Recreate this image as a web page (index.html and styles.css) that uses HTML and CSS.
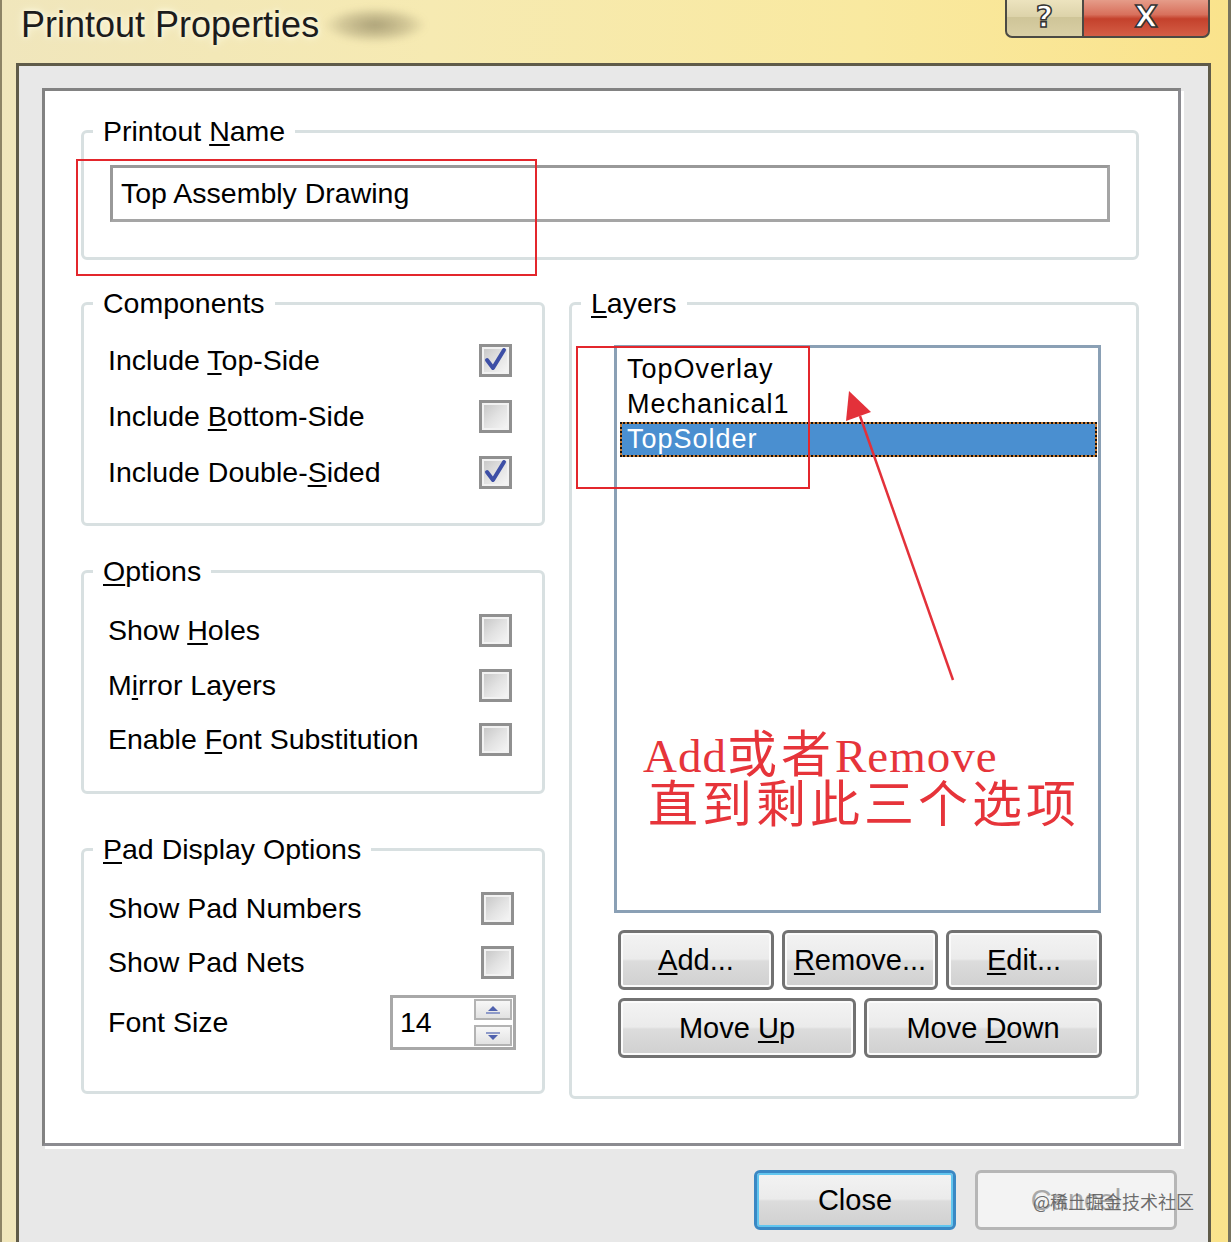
FILE: index.html
```html
<!DOCTYPE html>
<html>
<head>
<meta charset="utf-8">
<title>Printout Properties</title>
<link rel="stylesheet" href="styles.css">
</head>
<body>
<div class="window">
  <div class="titlebar">
    <div class="title">Printout Properties</div>
    <div class="smudge"></div>
    <div class="caption">
      <div class="cap help">?</div>
      <div class="cap close">X</div>
    </div>
  </div>
  <div class="client">
    <div class="panel">
      <fieldset class="group">
        <legend>Printout <u>N</u>ame</legend>
        <div class="name-body"><div class="textbox">Top Assembly Drawing</div></div>
      </fieldset>
      <div class="cols">
        <div class="left-col">
          <fieldset class="group">
            <legend>Components</legend>
            <div class="rows comp-rows">
              <div class="row"><span>Include <u>T</u>op-Side</span><span class="cb"><svg viewBox="0 0 27 27" width="27" height="27"><path d="M5 13 L11 21 L22 3" fill="none" stroke="#3d4fa6" stroke-width="4" stroke-linejoin="round" stroke-linecap="round"/></svg></span></div>
              <div class="row"><span>Include <u>B</u>ottom-Side</span><span class="cb"></span></div>
              <div class="row"><span>Include Double-<u>S</u>ided</span><span class="cb"><svg viewBox="0 0 27 27" width="27" height="27"><path d="M5 13 L11 21 L22 3" fill="none" stroke="#3d4fa6" stroke-width="4" stroke-linejoin="round" stroke-linecap="round"/></svg></span></div>
            </div>
          </fieldset>
          <fieldset class="group opt-group">
            <legend><u>O</u>ptions</legend>
            <div class="rows opt-rows">
              <div class="row"><span>Show <u>H</u>oles</span><span class="cb"></span></div>
              <div class="row"><span>M<u>i</u>rror Layers</span><span class="cb"></span></div>
              <div class="row"><span>Enable <u>F</u>ont Substitution</span><span class="cb"></span></div>
            </div>
          </fieldset>
          <fieldset class="group pad-group">
            <legend><u>P</u>ad Display Options</legend>
            <div class="rows pad-rows">
              <div class="row"><span>Show Pad Numbers</span><span class="cb"></span></div>
              <div class="row row-b"><span>Show Pad Nets</span><span class="cb"></span></div>
              <div class="row row-spin"><span>Font Size</span>
                <div class="spin"><span class="spin-val">14</span>
                  <div class="spin-btns">
                    <div class="sb"><svg viewBox="0 0 16 10" width="16" height="10"><path d="M8 1 L13 6 L3 6 Z" fill="#4f61ae"/><rect x="1" y="7" width="14" height="2" fill="#8f9bc9"/></svg></div>
                    <div class="sb"><svg viewBox="0 0 16 10" width="16" height="10"><rect x="1" y="1" width="14" height="2" fill="#8f9bc9"/><path d="M3 4 L13 4 L8 9 Z" fill="#4f61ae"/></svg></div>
                  </div>
                </div>
              </div>
            </div>
          </fieldset>
        </div>
        <fieldset class="group layers-group">
          <legend><u>L</u>ayers</legend>
          <div class="layers-body">
            <div class="listbox">
              <div class="item">TopOverlay</div>
              <div class="item">Mechanical1</div>
              <div class="item sel">TopSolder</div>
            </div>
            <div class="btns">
              <div class="brow brow3">
                <div class="btn"><span><u>A</u>dd...</span></div>
                <div class="btn"><span><u>R</u>emove...</span></div>
                <div class="btn"><span><u>E</u>dit...</span></div>
              </div>
              <div class="brow brow2">
                <div class="btn"><span>Move <u>U</u>p</span></div>
                <div class="btn"><span>Move <u>D</u>own</span></div>
              </div>
            </div>
          </div>
        </fieldset>
      </div>
    </div>
    <div class="bottom">
      <div class="btn dlg focus"><span>Close</span></div>
      <div class="btn dlg disabled"><span>Cancel</span></div>
    </div>
  </div>

  <div class="mark mark1"></div>
  <div class="mark mark2"></div>
  <svg class="arrow" width="1231" height="1242" viewBox="0 0 1231 1242">
    <line x1="953" y1="680" x2="860" y2="416" stroke="#e3313a" stroke-width="2.5"/>
    <polygon points="849,391 871,412 846,421" fill="#e3313a"/>
  </svg>
  <div class="note">
    <div class="l1"><span class="lat">Add</span><span class="cjk">或者</span><span class="lat">Remove</span></div>
    <div class="l2"><span class="cjk">直到剩此三个选项</span></div>
  </div>
  <div class="wm">@稀土掘金技术社区</div>
</div>
</body>
</html>
```

FILE: styles.css
```css
* { box-sizing: border-box; }
html, body { margin: 0; padding: 0; }
body {
  font-family: "Liberation Sans", Arial, sans-serif;
  background: #f5e8a8;
  color: #000;
}
u { text-decoration-thickness: 2px; text-underline-offset: 3px; }

.window {
  position: relative;
  width: 1231px;
  height: 1242px;
  overflow: hidden;
  background: linear-gradient(to right, #f0e6bc 0%, #f6eab2 35%, #f9e9a0 70%, #fae38c 100%);
  box-shadow: inset 2px 0 0 #8d8466, inset -3px 0 0 #77735f;
}

/* title bar */
.titlebar {
  height: 63px;
  display: flex;
  align-items: flex-start;
  padding-left: 21px;
}
.title {
  font-size: 36px;
  line-height: 50px;
  color: #1c1c1c;
  text-shadow: 0 0 10px #fffbe6, 0 0 4px #fffbe6;
}
.smudge {
  width: 104px;
  height: 36px;
  margin: 7px 0 0 4px;
  background: radial-gradient(ellipse at center, rgba(110,100,70,.55) 0%, rgba(110,100,70,.25) 45%, rgba(110,100,70,0) 70%);
  filter: blur(3px);
}
.caption {
  margin-left: auto;
  margin-right: 21px;
  margin-top: -3px;
  display: flex;
}
.cap {
  height: 41px;
  border: 2px solid #4b4a44;
  border-top: none;
  display: flex;
  align-items: center;
  justify-content: center;
  font-family: "DejaVu Sans", sans-serif;
  font-weight: bold;
  font-size: 30px;
  color: #fff;
  -webkit-text-stroke: 1.5px #333;
}
.cap.help {
  width: 77px;
  border-right: none;
  border-radius: 0 0 0 7px;
  background: linear-gradient(#efe6c2, #ddd3aa 50%, #cfc598 52%, #d9cfa5);
}
.cap.close {
  width: 128px;
  border-radius: 0 0 7px 0;
  background: linear-gradient(#e8a592, #d8705c 45%, #c4412c 56%, #d45e46);
}

/* client area */
.client {
  margin: 0 20px 0 16px;
  height: 1179px;
  background: #e8e8e8;
  border: 3px solid #5f5b49;
  border-bottom: none;
  padding-top: 22px;
}
.panel {
  margin: 0 27px 0 23px;
  height: 1058px;
  background: #fff;
  border: 3px solid #828282;
  border-right-color: #8b8b90;
  border-bottom-color: #8b8b90;
  box-shadow: 3px 3px 0 #fff;
  padding: 25px 39px 0 36px;
}

/* group boxes */
.group {
  margin: 0;
  padding: 0;
  border: 3px solid #d8e0e1;
  border-radius: 6px;
  min-width: 0;
}
.group legend {
  margin-left: 9px;
  padding: 0 10px;
  font-size: 28.5px;
  line-height: 30px;
}
.name-body { padding: 19px 26px 35px; }
.textbox {
  height: 57px;
  border: 3px solid #a5a5a5;
  border-top-color: #999;
  border-left-color: #999;
  font-size: 28.5px;
  line-height: 51px;
  padding-left: 8px;
}

.cols {
  display: grid;
  grid-template-columns: 464px 570px;
  column-gap: 24px;
  margin-top: 28px;
  align-items: start;
}
.left-col { display: flex; flex-direction: column; }
.opt-group { margin-top: 30px; }
.pad-group { margin-top: 40px; }

.rows { display: flex; flex-direction: column; }
.comp-rows { padding: 26px 30px 34px 24px; gap: 23px; }
.opt-rows { padding: 28px 30px 35px 24px; gap: 21.5px; }
.pad-rows { padding: 28px 28px 41px 24px; }
.pad-rows .row-b { margin-top: 21px; }
.pad-rows .row-spin { margin-top: 16px; height: 55px; }

.row {
  height: 33px;
  display: flex;
  align-items: center;
  justify-content: space-between;
  font-size: 28.5px;
  white-space: nowrap;
}
.cb {
  width: 33px;
  height: 33px;
  border: 3px solid #909090;
  background: linear-gradient(135deg, #c4c4c4 0%, #e2e2e2 50%, #f8f8f8 100%);
  box-shadow: inset 0 0 0 2px #f2f2f2;
  display: block;
  flex: none;
}
.cb svg { display: block; }

.spin {
  width: 126px;
  height: 55px;
  border: 3px solid #a8a8a8;
  display: flex;
  align-items: center;
  justify-content: space-between;
  padding: 1px 1px 1px 7px;
  margin-right: -2px;
  background: #fff;
}
.spin-val { font-size: 28.5px; }
.spin-btns { display: flex; flex-direction: column; gap: 5px; }
.sb {
  width: 38px;
  height: 21px;
  border: 2px solid #b3b3b3;
  background: linear-gradient(#f7f7f7, #e2e2e2);
  display: flex;
  align-items: center;
  justify-content: center;
}
.sb svg { display: block; }

/* layers */
.layers-body { padding: 27px 35px 38px 42px; }
.listbox {
  height: 568px;
  border: 3px solid #8aa0b5;
  padding: 4px 1px 0 3px;
}
.item {
  height: 35px;
  line-height: 35px;
  padding-left: 7px;
  font-size: 27px;
  letter-spacing: 1px;
}
.item.sel {
  background: #4a8fd0;
  color: #fff;
  outline: 2px dotted #111;
  outline-offset: -2px;
  box-shadow: inset 0 0 0 2px #c77b33;
}
.btns {
  margin: 17px -1px 0 4px;
  display: flex;
  flex-direction: column;
  gap: 8px;
}
.brow { display: grid; gap: 8px; }
.brow3 { grid-template-columns: 1fr 1fr 1fr; }
.brow2 { grid-template-columns: 1fr 1fr; }

.btn {
  height: 60px;
  border: 3px solid #727272;
  border-radius: 6px;
  background: linear-gradient(#f3f3f3 0%, #ebebeb 48%, #dcdcdc 52%, #d0d0d0 100%);
  box-shadow: inset 0 0 0 2px #fbfbfb;
  display: flex;
  align-items: center;
  justify-content: center;
  font-size: 29px;
  white-space: nowrap;
}

.bottom {
  display: flex;
  justify-content: flex-end;
  gap: 19px;
  margin: 24px 31px 0 0;
}
.dlg { width: 202px; }
.dlg.focus {
  border-color: #3a88c4;
  box-shadow: inset 0 0 0 2px #62c6ef;
}
.dlg.disabled {
  border-color: #b6b6b6;
  background: #f3f3f3;
  box-shadow: none;
  color: #a8a8a8;
}

/* annotations */
.mark {
  position: absolute;
  border: 2px solid #e3262c;
}
.mark1 { left: 76px; top: 159px; width: 461px; height: 117px; }
.mark2 { left: 576px; top: 346px; width: 234px; height: 143px; }
.arrow { position: absolute; left: 0; top: 0; pointer-events: none; }
.note {
  position: absolute;
  left: 643px;
  top: 725px;
  color: #e6343a;
  font-size: 50px;
  white-space: nowrap;
}
.note .l1, .note .l2 { height: 50px; line-height: 50px; }
.note .lat { font-family: "Liberation Serif", serif; font-size: 47px; letter-spacing: 1px; }
.note .cjk { font-family: "Noto Sans CJK SC", sans-serif; letter-spacing: 4px; }
.note .l2 { padding-left: 5px; }
.wm {
  position: absolute;
  left: 1033px;
  top: 1189px;
  font-family: "Noto Sans CJK SC", sans-serif;
  font-size: 18px;
  line-height: 24px;
  color: rgba(85, 85, 85, 0.85);
  white-space: nowrap;
}
```
